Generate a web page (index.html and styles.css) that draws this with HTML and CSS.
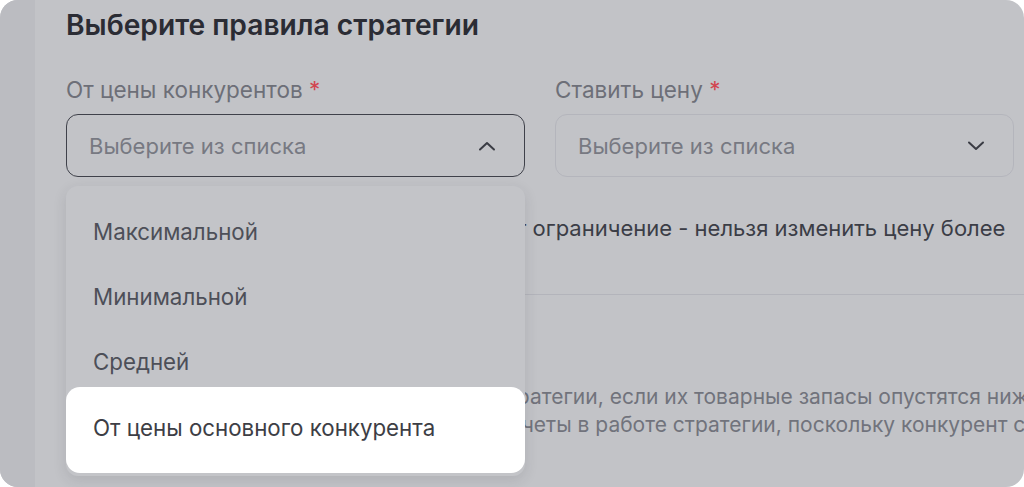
FILE: index.html
```html
<!DOCTYPE html>
<html lang="ru">
<head>
  <meta charset="utf-8">
  <title>Правила стратегии</title>
  <link rel="stylesheet" href="styles.css">
</head>
<body>
  <div class="frame">
    <aside class="sidebar"></aside>

    <main class="panel">
      <h1 class="title">Выберите правила стратегии</h1>

      <div class="fields">
        <div class="field">
          <label class="field-label">От цены конкурентов <span class="req">*</span></label>
          <div class="select select-open">
            <span class="placeholder">Выберите из списка</span>
            <svg class="chevron" width="18" height="10" viewBox="0 0 18 10"><path d="M2 8.5 L9 2 L16 8.5" fill="none" stroke="currentColor" stroke-width="2" stroke-linecap="round" stroke-linejoin="round"/></svg>
          </div>
        </div>
        <div class="field">
          <label class="field-label">Ставить цену <span class="req">*</span></label>
          <div class="select">
            <span class="placeholder">Выберите из списка</span>
            <svg class="chevron" width="18" height="10" viewBox="0 0 18 10"><path d="M2 1.5 L9 8 L16 1.5" fill="none" stroke="currentColor" stroke-width="2" stroke-linecap="round" stroke-linejoin="round"/></svg>
          </div>
        </div>
      </div>

      <p class="note">Для выбранных товаров всегда действует ограничение - нельзя изменить цену более чем на 30% за раз</p>

      <hr class="divider">

      <div class="hint">
        <div class="hint-line">Конкуренты будут исключены из работы стратегии, если их товарные запасы опустятся ниже порога</div>
        <div class="hint-line">Это поможет избежать сбоев и учесть просчеты в работе стратегии, поскольку конкурент скоро закончится</div>
      </div>

      <!-- dropdown of the first select -->
      <ul class="menu">
        <li class="menu-item">Максимальной</li>
        <li class="menu-item">Минимальной</li>
        <li class="menu-item">Средней</li>
        <li class="menu-item active">От цены основного конкурента</li>
      </ul>
    </main>
  </div>
</body>
</html>
```

FILE: styles.css
```css
body {
  margin: 0;
  background: #fff;
  font-family: Inter, "Noto Sans", sans-serif;
}
.frame {
  width: 1024px;
  height: 487px;
  display: flex;
  border-radius: 18px;
  overflow: hidden;
  background: #c2c3c7;
}
.sidebar {
  width: 35px;
  flex-shrink: 0;
  background: #bbbcc1;
}
.panel {
  position: relative;
  flex: 1;
  min-width: 0;
  padding: 8px 9px 0 31px;
  overflow: hidden;
}
.title {
  margin: 0;
  font-size: 28.2px;
  line-height: 34px;
  font-weight: 600;
  color: #2b2c34;
}
.fields {
  display: flex;
  gap: 30px;
  margin-top: 35px;
}
.field {
  width: 459px;
  flex-shrink: 0;
}
.field-label {
  display: block;
  font-size: 22.5px;
  line-height: 26px;
  color: #6d6f78;
  margin-bottom: 11px;
}
.req {
  color: #d2454f;
}
.select {
  height: 63px;
  box-sizing: border-box;
  border: 1px solid #b4b5bc;
  border-radius: 12px;
  display: flex;
  align-items: center;
  justify-content: space-between;
  padding: 0 28px 0 22px;
  color: #3a3c44;
}
.select-open {
  border: 1.5px solid #3f414a;
}
.placeholder {
  font-size: 22px;
  color: #777982;
}
.note {
  margin: 38px 0 0;
  font-size: 22px;
  line-height: 26px;
  color: #3b3d46;
}
.divider {
  margin: 27px -9px 0 0;
  border: 0;
  border-top: 1px solid #b3b4bb;
}
.hint {
  margin-top: 88px;
  font-size: 21px;
  line-height: 28px;
  color: #71737c;
}
.hint-line {
  white-space: nowrap;
}
.menu {
  position: absolute;
  top: 186px;
  left: 31px;
  width: 459px;
  margin: 0;
  padding: 13px 0 0;
  list-style: none;
  height: 290px;
  box-sizing: border-box;
  background: #c3c4c8;
  border-radius: 12px;
  box-shadow: 0 4px 14px rgba(40, 42, 50, 0.12);
}
.menu-item {
  height: 65px;
  display: flex;
  align-items: center;
  padding-left: 27px;
  font-size: 22.3px;
  color: #4d4f58;
}
.menu-item.active {
  height: 86px;
  margin-top: -7px;
  padding-bottom: 5px;
  box-sizing: border-box;
  background: #fff;
  border-radius: 14px;
  color: #3d3e45;
}
```
